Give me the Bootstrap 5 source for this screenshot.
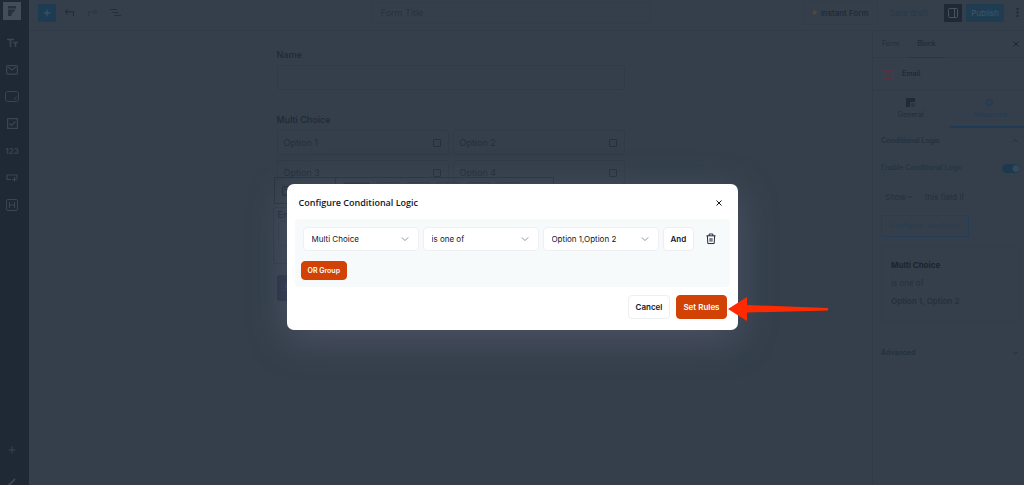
<!DOCTYPE html>
<html lang="en">
<head>
<meta charset="utf-8">
<meta name="viewport" content="width=device-width, initial-scale=1">
<title>Form editor</title>
<link href="https://cdn.jsdelivr.net/npm/bootstrap@5.3.0/dist/css/bootstrap.min.css" rel="stylesheet">
<style>
:root{--canvas:#343f4b;--edge:#313b47;--ink:#1f2936;--soft:#25303d}
body{font-family:Inter,"Liberation Sans",sans-serif;font-size:8px;line-height:12px;background:var(--canvas);color:var(--soft)}
svg{display:block;flex:none}
.line{fill:none;stroke:currentColor}
button,input,select{font-family:inherit}
.btn{--bs-btn-font-size:8px;--bs-btn-line-height:12px;--bs-btn-padding-x:7px;--bs-btn-padding-y:0;--bs-btn-border-radius:4px}
.plain{border:0;background:none;padding:0;color:inherit}
/* left rail */
.rail{width:29px;background:#1f2935;color:#3a4551;padding:0 5px 0 0;height:100vh}
.rail button{height:27px;width:24px;display:flex;align-items:center;justify-content:center}
.rail .brand{height:18px;width:18px;margin:2px 0 9px 3px;background:#424d58;color:#25313d}
.rail .numbers{font-size:8px;font-weight:600}
.rail .edit{height:22px}
/* top bar */
.topbar{height:31px;border-bottom:1px solid var(--edge);padding:0 1px 5px 9px}
.add{width:18px;height:18px;background:#1d3b51;color:#3f586a;border-radius:1px;display:grid;place-items:center}
.title-slot{padding-right:152px}
.form-title{width:280px;height:22px;border:1px solid #323d49;border-radius:4px;background:none;color:#27323f;font-size:9px;padding:0 9px}
.form-title::placeholder{color:#27323f;opacity:1}
.instant{border:1px solid #323d49;border-radius:2px;height:24px;padding:0 8px;font-weight:500;color:var(--ink)}
.draft{color:#26394d}
.panel-toggle{width:18px;height:18px;background:var(--ink);color:#465260;border-radius:1px;display:grid;place-items:center}
.publish{background:#1f3c51;color:#405869;height:18px;width:38px;border-radius:1px}
/* form canvas */
.sheet{width:348px;max-width:100%;font-size:9px;color:var(--ink);margin-top:18px}
.field-label{font-weight:500;display:block;margin-bottom:4px}
.field-box{display:block;width:100%;height:25px;background:none;border:1px solid var(--edge);border-radius:3px}
.choices{display:grid;grid-template-columns:1fr 1fr;gap:5px 4px}
.choice{height:25px;border:1px solid var(--edge);border-radius:3px;padding:0 7px 0 6px;color:#242e3b}
.choice input{appearance:none;width:8px;height:8px;border:1px solid #25303c;border-radius:1px;margin:0}
.email-block{border:1px solid #253a58;border-radius:2px;height:57px;margin:22px -4px 0;padding:1px 4px}
.block-tools{bottom:100%;left:0;margin-bottom:4px;height:27px;width:280px;border:1px solid #29333f;padding:4px 7px;gap:7px}
.block-tools .slot{height:18px;width:23px;border:1px solid #2d3743;border-radius:2px}
.block-tools .block-kind{width:54px;height:26px;margin-top:-4px;border-right:1px solid #29333f;padding-top:8px}
.block-tools .chosen{width:27px;background:#28323e}
.submit{background:#273145;color:#35425a;height:26px;width:60px;border-radius:3px;margin-top:11px;text-align:left}
/* settings panel */
.panel{width:152px;border-left:1px solid var(--edge);font-size:7px}
.panel-tabs{height:27px;border-bottom:1px solid var(--edge);padding-right:5px}
.panel-tabs button{height:27px;padding:0 9px;font-weight:500}
.panel-tabs .current{border-bottom:1px solid #29335a;color:var(--ink)}
.block-name{height:32px;padding:0 10px;gap:8px;font-weight:600;color:var(--ink)}
.modes{height:38px;border-top:1px solid var(--edge)}
.modes button{display:flex;flex-direction:column;align-items:center;gap:2px;padding-top:7px;font-weight:500}
.modes .current{color:#243c55;border-bottom:2px solid #213a55;padding-left:7px}
.fold{height:26px;padding:0 5px 0 8px;font-weight:600}
.switchy{appearance:none;width:18px;height:9px;border-radius:5px;background:radial-gradient(circle at 14px 50%,#34495a 3px,#1d394d 4px);margin:0}
.condition{margin:6px 0 9px}
.show{height:18px;width:36px;border:1px solid #333e4a;border-radius:2px;padding:0 3px;color:var(--soft);background:url("data:image/svg+xml,%3Csvg xmlns='http://www.w3.org/2000/svg' viewBox='0 0 6 6' fill='none' stroke='%2325303d'%3E%3Cpath d='M1 2l2 2 2-2'/%3E%3C/svg%3E") right 3px center/6px no-repeat;appearance:none;font-size:8px}
.show + label{font-size:8px}
.configure{height:22px;border:1px solid #233d5b;border-radius:2px;color:#273c52;padding:0 8px}
.rule{border:1px solid #323d49;border-radius:3px;height:76px;margin:9px 3px 0 0;padding:12px 9px 0;font-size:8px}
.rule div{height:18px}
.rule .subject{color:#1a2430}
/* dialog */
.veil{padding-top:184px;pointer-events:none}
.dialog{width:451px;max-width:100%;background:#fff;border-radius:7px;color:#0f1729;box-shadow:0 9px 38px 0 rgba(128,124,155,.34);pointer-events:auto;padding:11px 8px}
.dialog h1{font-size:9px;line-height:16px;font-weight:600;margin:0 0 8px 4px;font-family:"Open Sans",sans-serif}
.ruleset{background:#f7fafb;border-radius:4px;height:68px;padding:8px 8px 0}
.dialog .form-select{width:116px;height:24px;font-size:8px;line-height:12px;padding:0 18px 0 8px;border:1px solid #eef0f3;border-radius:4px;color:#0f1729;background:#fff url("data:image/svg+xml,%3Csvg xmlns='http://www.w3.org/2000/svg' viewBox='0 0 8 8' fill='none' stroke='%238a92a0'%3E%3Cpath d='M.8 2.4L4 5.6l3.2-3.2'/%3E%3C/svg%3E") right 9px center/8px no-repeat}
.light{--bs-btn-bg:#fff;--bs-btn-border-color:#eceef1;--bs-btn-color:#0f1729;font-weight:600;height:24px}
.hot{--bs-btn-bg:#d14204;--bs-btn-border-color:#d14204;--bs-btn-color:#fff;--bs-btn-padding-x:6px;font-weight:600;height:24px}
.or-group{--bs-btn-font-size:7px;height:19px;margin:10px 0 0 -2px}
.actions{gap:6px;padding-right:3px}
.pointer-arrow{left:100%;bottom:8px;margin-left:-10px}
</style>
</head>
<body class="overflow-hidden">
<div class="d-flex vh-100 overflow-hidden">
  <nav class="rail d-flex flex-column flex-shrink-0" aria-label="Blocks">
    <button class="plain brand" aria-label="Home"><svg width="10" height="12" viewBox="0 0 10 12"><path fill="currentColor" d="M1 1h8v2.500H1zM1 4.500h7.500L7 7H1zM1 7h4.500v2H1zM1 9h3.500v2H1z"/></svg></button>
    <button class="plain" aria-label="Text"><svg class="line" width="11" height="10" viewBox="0 0 11 10" stroke-width="1.600"><path d="M0 1.500h7M3.500 1v8M6 4.500h5M8.500 4v5"/></svg></button>
    <button class="plain" aria-label="Email"><svg class="line" width="12" height="10" viewBox="0 0 12 10" stroke-width="1.200"><rect x=".6" y=".6" width="10.800" height="8.600" rx="1"/><path d="M2 2l4 3 4-3"/></svg></button>
    <button class="plain" aria-label="Text area"><svg class="line" width="14" height="11" viewBox="0 0 14 11"><rect x=".5" y=".5" width="13" height="10" rx="2"/><path d="M8.500 8.500l3-3M10.500 8.500l1-1"/></svg></button>
    <button class="plain" aria-label="Checkbox"><svg class="line" width="11" height="11" viewBox="0 0 11 11" stroke-width="1.200"><rect x=".6" y=".6" width="9.800" height="9.800"/><path d="M2.500 5.500l2 2 4-4"/></svg></button>
    <button class="plain numbers">123</button>
    <button class="plain" aria-label="Button"><svg class="line" width="12" height="8" viewBox="0 0 12 8" stroke-width="1.200"><path d="M5 5.500H1V1h10v3.500M8.500 3v4.500M6 5.500h5"/></svg></button>
    <button class="plain" aria-label="Hidden"><svg class="line" width="12" height="12" viewBox="0 0 12 12"><rect x=".5" y=".5" width="11" height="11" rx="1.500"/><path d="M3.500 3v6M8.500 3v6M3.500 6h5"/></svg></button>
    <button class="plain mt-auto" aria-label="Add"><svg class="line" width="8" height="8" viewBox="0 0 8 8"><path d="M4 .5v7M.5 4h7"/></svg></button>
    <button class="plain edit align-items-end" aria-label="Edit"><svg class="line" width="10" height="8" viewBox="0 0 10 8" stroke-width="2"><path d="M1 9l7-7"/></svg></button>
  </nav>

  <div class="flex-grow-1 d-flex flex-column">
    <header class="topbar d-flex align-items-center flex-shrink-0">
      <button class="plain add me-2" aria-label="Add block"><svg class="line" width="8" height="8" viewBox="0 0 8 8"><path d="M4 .5v7M.5 4h7"/></svg></button>
      <button class="plain me-1 pe-2" aria-label="Undo"><svg width="11" height="9" viewBox="0 0 11 9" fill="none" stroke="#1f2937"><path d="M4 1L1 3.800l3 2.700M1 3.800h8.500V8"/></svg></button>
      <button class="plain me-2 pe-1" aria-label="Redo"><svg width="11" height="9" viewBox="0 0 11 9" fill="none" stroke="#2b3642"><path d="M7 1l3 2.800-3 2.700M10 3.800H1.500V8"/></svg></button>
      <button class="plain" aria-label="Outline"><svg width="11" height="9" viewBox="0 0 11 9" fill="none" stroke="#242f3c"><path d="M0 1.500h7M2.500 4.500h6M4 7.500h7"/></svg></button>
      <div class="title-slot flex-grow-1 d-flex justify-content-end"><input class="form-title" placeholder="Form Title" aria-label="Form title"></div>
      <button class="plain instant d-flex align-items-center gap-1 me-2"><svg width="5" height="5" viewBox="0 0 5 5"><circle cx="2.500" cy="2.500" r="2.200" fill="#4d493a"/></svg>Instant Form</button>
      <button class="plain draft ms-1 me-3">Save draft</button>
      <button class="plain panel-toggle" aria-label="Settings"><svg class="line" width="10" height="10" viewBox="0 0 10 10"><rect x=".5" y=".5" width="9" height="9" rx="1"/><path d="M6.500 0v10"/></svg></button>
      <button class="plain publish mx-1">Publish</button>
      <button class="plain ms-2 me-1" aria-label="More"><svg width="3" height="11" viewBox="0 0 3 11"><path fill="#1f2937" d="M.5 1h2v2h-2zM.5 4.500h2v2h-2zM.5 8h2v2h-2z"/></svg></button>
    </header>

    <div class="flex-grow-1 d-flex">
      <main class="flex-grow-1 d-flex justify-content-center">
        <form class="sheet">
          <label class="field-label" for="name">Name</label>
          <input class="field-box" id="name">
          <div class="field-label pt-4">Multi Choice</div>
          <div class="choices">
            <label class="choice d-flex align-items-center justify-content-between">Option 1<input type="checkbox"></label>
            <label class="choice d-flex align-items-center justify-content-between">Option 2<input type="checkbox"></label>
            <label class="choice d-flex align-items-center justify-content-between">Option 3<input type="checkbox"></label>
            <label class="choice d-flex align-items-center justify-content-between">Option 4<input type="checkbox"></label>
          </div>
          <div class="email-block position-relative">
            <div class="block-tools position-absolute d-flex align-items-start">
              <div class="block-kind"><svg class="line" width="12" height="10" viewBox="0 0 12 10"><rect x=".6" y=".6" width="10.800" height="8.600" rx="1"/><path d="M2 2l4 3 4-3"/></svg></div>
              <span class="slot chosen"></span><span class="slot"></span><span class="slot"></span><span class="slot"></span><span class="slot"></span><span class="slot"></span>
            </div>
            <label for="email">Email</label>
            <input class="field-box" id="email">
          </div>
          <button type="button" class="plain submit ps-2">Submit</button>
        </form>
      </main>

      <aside class="panel flex-shrink-0">
        <div class="panel-tabs d-flex align-items-center">
          <button class="plain">Form</button><button class="plain current">Block</button>
          <button class="plain ms-auto p-0" aria-label="Close"><svg width="6" height="6" viewBox="0 0 6 6" stroke="#1b2531"><path d="M.5.5l5 5M5.500.5l-5 5"/></svg></button>
        </div>
        <div class="block-name d-flex align-items-center"><svg width="11" height="9" viewBox="0 0 11 9" fill="none" stroke="#5a3340"><rect x=".5" y=".5" width="10" height="8"/><path d="M1 1l4.500 3.500L10 1"/></svg>Email</div>
        <div class="modes d-flex">
          <button class="plain w-50"><svg width="9" height="9" viewBox="0 0 9 9"><path fill="#1f2937" d="M0 0h9v4H4v5H0z"/><path fill="#2a3542" d="M5 5h4v4H5z"/></svg>General</button>
          <button class="plain w-50 current"><svg class="line" width="9" height="9" viewBox="0 0 9 9"><circle cx="4.500" cy="4.500" r="2.600" stroke-width="1.600"/><path d="M4.500 0v1.500M4.500 7.500V9M0 4.500h1.500M7.500 4.500H9M1.300 1.300l1 1M6.700 6.700l1 1M7.700 1.300l-1 1M2.300 6.700l-1 1"/></svg>Advanced</button>
        </div>
        <button class="plain fold w-100 d-flex align-items-center justify-content-between">Conditional Logic<svg class="line" width="8" height="6" viewBox="0 0 8 6"><path d="M1.500 4L4 1.500 6.500 4"/></svg></button>
        <div class="ps-2">
          <div class="d-flex align-items-center justify-content-between pt-2 pb-2 pe-1"><label for="enable">Enable Conditional Logic</label><input id="enable" class="switchy" type="checkbox" role="switch" checked></div>
          <div class="condition d-flex align-items-center gap-2"><select id="show" class="show"><option>Show</option></select><label for="show">this field if</label></div>
          <button class="plain configure">Configure Conditions</button>
          <div class="rule"><div class="subject fw-bold">Multi Choice</div><div>is one of</div><div class="fw-semibold">Option 1, Option 2</div></div>
        </div>
        <button class="plain fold w-100 d-flex align-items-center justify-content-between mt-3 pt-1">Advanced<svg class="line" width="8" height="6" viewBox="0 0 8 6"><path d="M1.500 1.500L4 4l2.500-2.500"/></svg></button>
      </aside>
    </div>
  </div>
</div>

<div class="veil position-absolute top-0 start-0 w-100 d-flex justify-content-center">
  <section class="dialog position-relative" role="dialog" aria-labelledby="dialog-title">
    <div class="d-flex justify-content-between pe-2">
      <h1 id="dialog-title">Configure Conditional Logic</h1>
      <button class="plain mb-2" aria-label="Close"><svg class="line" width="6" height="6" viewBox="0 0 6 6"><path d="M.5.5l5 5M5.500.5l-5 5"/></svg></button>
    </div>
    <div class="ruleset">
      <div class="d-flex align-items-center gap-1">
        <select class="form-select" aria-label="Field"><option>Multi Choice</option></select>
        <select class="form-select" aria-label="Operator"><option>is one of</option></select>
        <select class="form-select" aria-label="Value"><option>Option 1,Option 2</option></select>
        <button class="btn light">And</button>
        <button class="plain ms-2" aria-label="Delete"><svg class="line" width="10" height="12" viewBox="0 0 11 12"><path d="M.5 2.500h10M3.500 2.500v-2h4v2M1.500 2.500l.5 8.500h7l.5-8.500M4.500 5v4M6.500 5v4"/></svg></button>
      </div>
      <button class="btn hot or-group">OR Group</button>
    </div>
    <div class="actions d-flex justify-content-end mt-2">
      <button class="btn light">Cancel</button>
      <button class="btn hot">Set Rules</button>
    </div>
    <svg class="pointer-arrow position-absolute" width="100" height="26" viewBox="0 0 100 26"><path fill="#ff2a00" d="M0 13L19 1v8l81 3v2.500l-81 2v8.500z"/></svg>
  </section>
</div>
<script src="https://cdn.jsdelivr.net/npm/bootstrap@5.3.0/dist/js/bootstrap.bundle.min.js"></script>
</body>
</html>
